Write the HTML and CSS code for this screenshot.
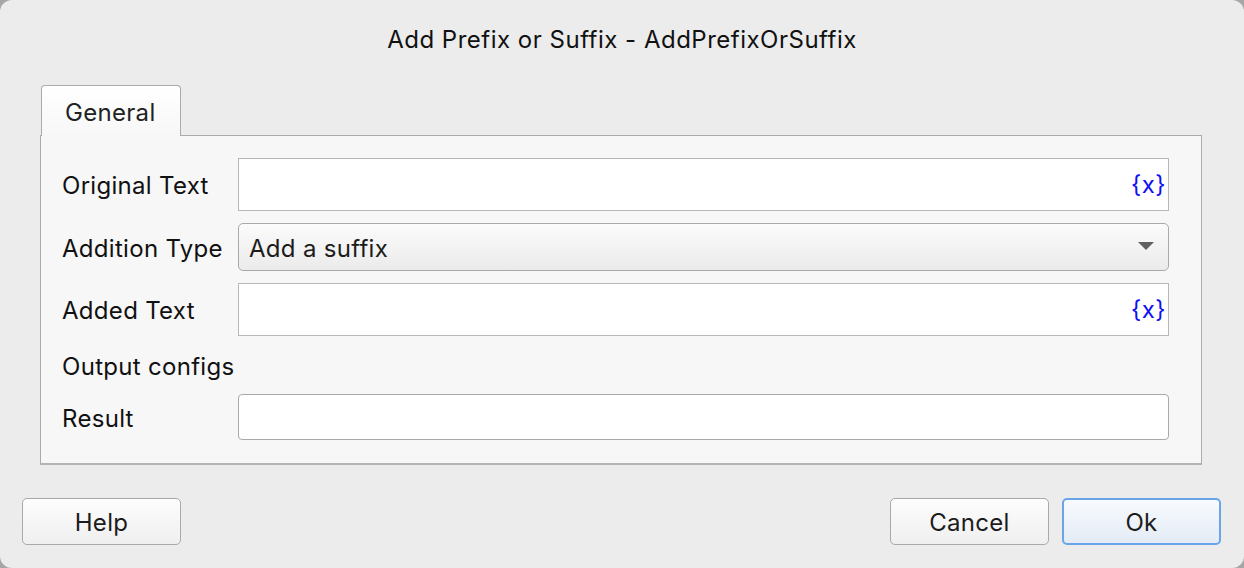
FILE: index.html
```html
<!DOCTYPE html>
<html>
<head>
<meta charset="utf-8">
<link rel="stylesheet" href="styles.css">
</head>
<body>
<div class="window">
  <div class="title">Add Prefix or Suffix - AddPrefixOrSuffix</div>
  <div class="tabs">
    <div class="tab">General</div>
  </div>
  <div class="panel">
    <div class="form">
      <div class="label">Original Text</div>
      <div class="field"><span class="var">{x}</span></div>
      <div class="label">Addition Type</div>
      <div class="combo"><span>Add a suffix</span><span class="arrow"></span></div>
      <div class="label">Added Text</div>
      <div class="field"><span class="var">{x}</span></div>
      <div class="label span2">Output configs</div>
      <div class="label">Result</div>
      <div class="field result"></div>
    </div>
  </div>
  <div class="buttons">
    <div class="btn">Help</div>
    <div class="spacer"></div>
    <div class="btn">Cancel</div>
    <div class="btn primary">Ok</div>
  </div>
</div>
</body>
</html>
```
FILE: styles.css
```css
* { box-sizing: border-box; }
html, body { margin: 0; padding: 0; }
body {
  width: 1244px;
  height: 568px;
  background: #a6a6a6;
  font-family: Inter, "Liberation Sans", sans-serif;
  color: #141414;
  overflow: hidden;
}
.window {
  width: 1244px;
  height: 568px;
  background: #ececec;
  border-radius: 12px;
  display: flex;
  flex-direction: column;
  overflow: hidden;
}
.title {
  height: 85px;
  padding-top: 26px;
  text-align: center;
  font-size: 24px;
  letter-spacing: 0.5px;
  line-height: 28px;
  color: #111;
}
.tabs {
  display: flex;
  padding-left: 41px;
  height: 51px;
  position: relative;
  z-index: 1;
}
.tab {
  width: 140px;
  height: 51px;
  border: 1px solid #ababab;
  border-bottom: none;
  border-radius: 4px 4px 0 0;
  background: linear-gradient(#ffffff, #f7f7f7);
  font-size: 24px;
  letter-spacing: 0.3px;
  padding: 12px 0 0 23px;
  line-height: 30px;
  color: #222;
}
.panel {
  margin: -1px 42px 0 40px;
  height: 330px;
  border: 1px solid #ababab;
  border-bottom: 2px solid #b4b4b4;
  background: #f7f7f7;
  padding: 22px 32px 0 21px;
}
.form {
  display: grid;
  grid-template-columns: 176px 1fr;
  grid-template-rows: 53px 48px 53px 34px 46px;
  row-gap: 12px;
}
.label {
  font-size: 24px;
  letter-spacing: 0.3px;
  display: flex;
  align-items: center;
  padding-top: 2px;
  color: #111;
}
.span2 { grid-column: 1 / 3; }
.field {
  background: #fff;
  border: 1px solid #b8b8b8;
  display: flex;
  align-items: center;
  justify-content: flex-end;
  padding-right: 2px;
}
.field.result {
  border-radius: 4px;
  border-color: #a9a9a9;
}
.var {
  color: #1010f5;
  font-size: 24px;
  letter-spacing: 0.5px;
}
.combo {
  border: 1px solid #a9a9a9;
  border-radius: 5px;
  background: linear-gradient(#fbfbfb, #ebebeb);
  display: flex;
  align-items: center;
  justify-content: space-between;
  padding: 2px 14px 0 10px;
  font-size: 24px;
  letter-spacing: 0.3px;
  color: #1c1c1c;
}
.arrow {
  width: 0;
  height: 0;
  border-left: 8px solid transparent;
  border-right: 8px solid transparent;
  border-top: 8px solid #606060;
  margin-bottom: 4px;
}
.buttons {
  display: flex;
  gap: 13px;
  padding: 0 23px 0 22px;
  margin-top: 33px;
}
.spacer { flex: 1; }
.btn {
  width: 159px;
  height: 47px;
  border: 1px solid #a9a9a9;
  border-radius: 5px;
  background: linear-gradient(#fdfdfd, #efefef);
  font-size: 24px;
  letter-spacing: 0.3px;
  display: flex;
  align-items: center;
  justify-content: center;
  padding-top: 2px;
  color: #1c1c1c;
}
.btn.primary {
  border: 2px solid #6aa5ea;
  background: linear-gradient(#f8fbff, #e4ebf5);
}
```
